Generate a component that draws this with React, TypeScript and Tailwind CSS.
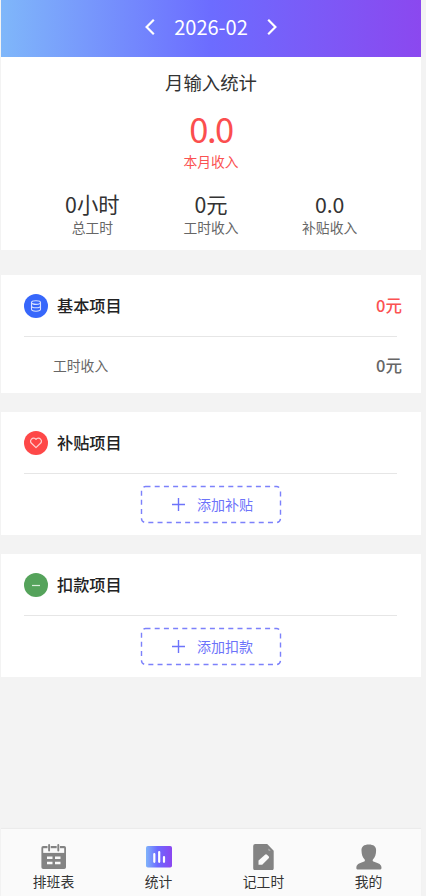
import React from "react";
import { clsx } from "clsx";

const summary = [
  { value: "0小时", label: "总工时" },
  { value: "0元", label: "工时收入" },
  { value: "0.0", label: "补贴收入" },
];

const DatabaseIcon = () => (
  <svg width="12" height="12" viewBox="0 0 12 12" fill="none" stroke="#d8e2ff" strokeWidth="1.1">
    <ellipse cx="6" cy="2.6" rx="4.5" ry="1.8" />
    <path d="M1.5 2.6v6.700c0 1.100 2 1.900 4.500 1.900s4.500-.8 4.500-1.900V2.600" />
    <path d="M1.500 5.900c0 1.100 2 1.900 4.500 1.900s4.500-.8 4.500-1.900" />
  </svg>
);

const HeartIcon = () => (
  <svg width="12" height="12" viewBox="0 0 12 12" fill="none" stroke="#ffd0d0" strokeWidth="1.200" strokeLinejoin="round">
    <path d="M6 2.400C5 .9 2.700.8 1.500 2.100.3 3.400.4 5.100 1.500 6.300L6 10.600l4.500-4.300c1.100-1.200 1.200-2.900 0-4.200C9.300.8 7 .9 6 2.400Z" />
  </svg>
);

const MinusIcon = () => (
  <svg width="12" height="12" viewBox="0 0 12 12" stroke="#d9eeda" strokeWidth="1.200">
    <path d="M2 6.500h8" />
  </svg>
);

const CalendarIcon = () => (
  <svg width="26" height="26" viewBox="0 0 26 26" fill="none">
    <path d="M2.200 2h21A1.800 1.800 0 0 1 25 3.800v19.400a1.800 1.800 0 0 1-1.800 1.800h-21A1.800 1.800 0 0 1 .4 23.200V3.800A1.800 1.800 0 0 1 2.200 2Z" fill="#838383" />
    <path d="M2.200 4.200h21v4.700h-21z" fill="#fafafa" />
    <path d="M8.100 0v7.200M17.300 0v7.200" stroke="#fafafa" strokeWidth="3.200" />
    <path d="M8.100 1v5.600M17.300 1v5.600" stroke="#838383" strokeWidth="1.900" strokeLinecap="round" />
    <path d="M6 12.500h5.500V15H6zM14 12.500h5.500V15H14zM6 17.800h5.500v2.500H6zM14 17.800h5.500v2.500H14z" fill="#fafafa" />
  </svg>
);

const ChartIcon = () => (
  <svg width="26" height="26" viewBox="0 0 26 26">
    <defs>
      <linearGradient id="chart" x1="0" x2="1" y1="0" y2="0">
        <stop offset="0" stopColor="#7fb3fa" />
        <stop offset="0.450" stopColor="#6c69ff" />
        <stop offset="1" stopColor="#8b46f0" />
      </linearGradient>
    </defs>
    <rect x="0" y="2" width="26" height="21.500" rx="1.800" fill="url(#chart)" />
    <path d="M8.300 10.200v7.600M13.200 8v9.800M18 13.200v4.600" stroke="#fff" strokeWidth="2.200" strokeLinecap="round" />
  </svg>
);

const RecordIcon = () => (
  <svg width="26" height="26" viewBox="0 0 26 26">
    <path d="M4.200 0h12l6.500 6.700v17.600a2 2 0 0 1-2 2H4.200a2 2 0 0 1-2-2V2a2 2 0 0 1 2-2Z" fill="#838383" />
    <path d="m17.500 4.500 2.200 2.200-2.200-.3z" fill="#c4c4c4" />
    <path d="M7.500 20.800v-4.300l6.800-5.900q.9-.7 1.700.1l1.800 1.900q.7.800-.1 1.600l-6.500 6.600z" fill="#fafafa" />
  </svg>
);

const UserIcon = () => (
  <svg width="26" height="26" viewBox="0 0 26 26" fill="#838383">
    <path d="M12.800.5c4.700 0 7.600 2 7.300 6.200-.1 3.600-1 6.600-3.200 8.700-.4 1-.2 1.600.5 2 3.500 1.500 7.500 1.900 8 5.600.2 1.400 0 2.500-1.200 2.500H1.600C.4 25.500.2 24.400.4 23c.5-3.700 4.300-4.100 7.800-5.600.7-.4.9-1 .5-2-2.200-2.100-3.100-5.100-3.200-8.700C5.200 2.500 8.100.5 12.800.5Z" />
  </svg>
);

const tabs = [
  { label: "排班表", icon: <CalendarIcon /> },
  { label: "统计", icon: <ChartIcon /> },
  { label: "记工时", icon: <RecordIcon /> },
  { label: "我的", icon: <UserIcon /> },
];

const Chevron = ({ flip }: { flip?: boolean }) => (
  <svg
    width="10"
    height="18"
    viewBox="0 0 10 18"
    fill="none"
    stroke="#fff"
    strokeWidth="2.200"
    className={clsx(flip && "rotate-180")}
  >
    <path d="M8.800 1.800 1.600 9l7.200 7.200" />
  </svg>
);

const SectionHeader = ({
  title,
  color,
  icon,
  amount,
}: {
  title: string;
  color: string;
  icon: React.ReactNode;
  amount?: string;
}) => (
  <>
    <div className="flex h-[61px] items-center pl-[23px] pr-[19px]">
      <div className={clsx("flex size-6 items-center justify-center rounded-full", color)}>{icon}</div>
      <h2 className="ml-[9px] text-[16.200px] font-medium text-[#222]">{title}</h2>
      {amount && <span className="ml-auto text-[16.500px] font-medium text-[#fb5252]">{amount}</span>}
    </div>
    <div className="ml-[23px] mr-6 h-px bg-[#e6e6e6]" />
  </>
);

const AddButton = ({ label }: { label: string }) => (
  <button className="relative ml-[139px] mt-[11px] flex h-[39px] w-[142px] items-center pl-8 text-[#6d73fa]">
    <svg className="absolute inset-0" width="142" height="39" fill="none" stroke="#7c81fb" strokeWidth="1.400">
      <rect x="1.500" y="1.500" width="139" height="36" rx="4" strokeDasharray="5 4.200" />
    </svg>
    <svg width="13" height="13" viewBox="0 0 13 13" stroke="currentColor" strokeWidth="1.400">
      <path d="M6.500 0v13M0 6.500h13" />
    </svg>
    <span className="mb-px ml-3 text-[14px] leading-5">{label}</span>
  </button>
);

export default function App() {
  return (
    <div className="flex h-[896px] w-[426px] flex-col bg-[#f3f3f3] pl-px pr-[5px] font-['Noto_Sans_CJK_SC',sans-serif]">
      <header className="flex h-[57px] items-center justify-center bg-[linear-gradient(90deg,#7fb7fa_0%,#6c6cff_50%,#8b48ef_100%)] pb-1 text-white">
        <Chevron />
        <span className="mx-[19px] text-[20px] leading-6">2026-02</span>
        <Chevron flip />
      </header>

      <section className="h-[193px] bg-white text-center">
        <h1 className="pt-3 text-[18.400px] leading-[26px] text-[#333]">月输入统计</h1>
        <p className="mt-2 text-[34.500px] leading-[50px] tracking-[-1.500px] text-[#fb4e4e]">0.0</p>
        <p className="-mt-0.5 text-[13.800px] leading-5 text-[#fb5252]">本月收入</p>
        <div className="mt-5 grid grid-cols-3 px-8">
          {summary.map((item) => (
            <div key={item.label}>
              <p className="text-[21.300px] leading-[26px] text-[#333]">{item.value}</p>
              <p className="text-[13.800px] leading-5 text-[#666]">{item.label}</p>
            </div>
          ))}
        </div>
      </section>

      <section className="mt-[25px] h-[118px] bg-white">
        <SectionHeader title="基本项目" color="bg-[#3767fb]" icon={<DatabaseIcon />} amount="0元" />
        <div className="flex h-[56px] items-center justify-between pl-[52px] pr-[19px] text-[#666]">
          <span className="text-[13.800px]">工时收入</span>
          <span className="text-[16.500px] font-medium">0元</span>
        </div>
      </section>

      <section className="mt-[19px] h-[123px] bg-white">
        <SectionHeader title="补贴项目" color="bg-[#fe4848]" icon={<HeartIcon />} />
        <AddButton label="添加补贴" />
      </section>

      <section className="mt-[19px] h-[123px] bg-white">
        <SectionHeader title="扣款项目" color="bg-[#55a35b]" icon={<MinusIcon />} />
        <AddButton label="添加扣款" />
      </section>

      <nav className="mt-auto grid h-[67px] grid-cols-4 bg-[#fafafa] shadow-[0_-1px_1px_#ebebeb]">
        {tabs.map((tab) => (
          <div key={tab.label} className="flex flex-col items-center pt-[15px]">
            {tab.icon}
            <span className="mt-px text-[13.800px] leading-5 text-[#333]">{tab.label}</span>
          </div>
        ))}
      </nav>
    </div>
  );
}
